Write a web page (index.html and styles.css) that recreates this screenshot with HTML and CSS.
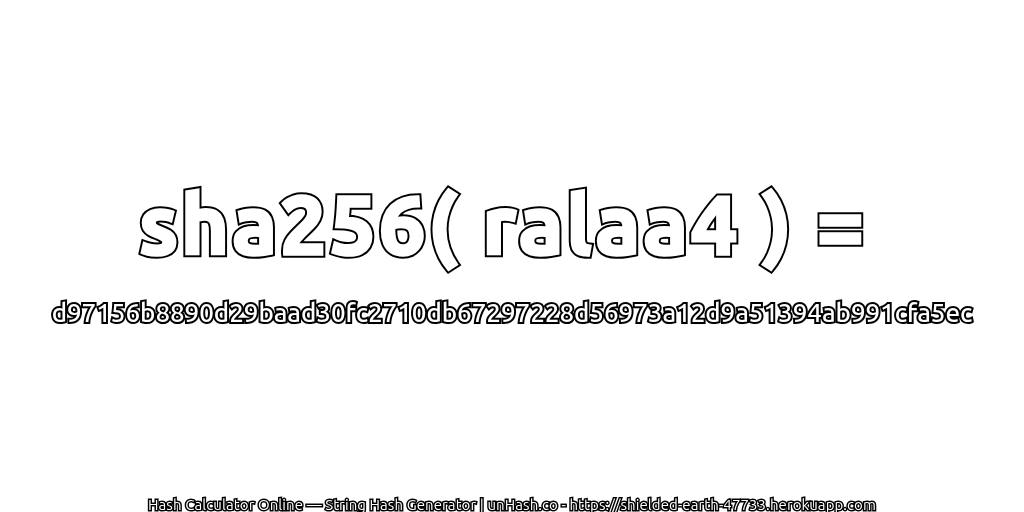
FILE: index.html
```html
<!DOCTYPE html>
<html lang="en">
<head>
    <meta charset="UTF-8">
    <title>Hash Calculator Online</title>
    <link rel="stylesheet" href="styles.css">
</head>
<body>
    <main class="hash-card">
        <h1 class="hash-title" data-text="sha256( ralaa4 ) =">sha256( ralaa4 ) =</h1>
        <p class="hash-value">d97156b8890d29baad30fc2710db67297228d56973a12d9a51394ab991cfa5ec</p>
    </main>
    <footer class="hash-footer">Hash Calculator Online — String Hash Generator | unHash.co - https://shielded-earth-47733.herokuapp.com</footer>
</body>
</html>
```

FILE: styles.css
```css
html, body {
    margin: 0;
    height: 100%;
}
body {
    display: flex;
    flex-direction: column;
    width: 1024px;
    height: 512px;
    overflow: hidden;
    background-color: white;
    font-family: "Ubuntu", "Open Sans", "DejaVu Sans", sans-serif;
    color: white;
    text-align: center;
    -webkit-text-stroke-color: black;
    paint-order: stroke fill;
}
.hash-card {
    flex: 1;
    display: flex;
    flex-direction: column;
    align-items: center;
    padding-top: 174px;
}
.hash-title {
    position: relative;
    margin: 0 18px 0 0;
    font-size: 82px;
    line-height: 100px;
    font-weight: 700;
    letter-spacing: 3.2px;
    white-space: nowrap;
    -webkit-text-stroke-width: 7.5px;
}
/* white layer on top so the outline stays thin on fat letters */
.hash-title::after {
    content: attr(data-text);
    position: absolute;
    top: 0;
    left: 0;
    -webkit-text-stroke-color: white;
    -webkit-text-stroke-width: 3.5px;
}
.hash-value {
    margin: 24px 0 0;
    font-size: 26px;
    line-height: 30px;
    font-weight: 500;
    letter-spacing: -0.05px;
    white-space: nowrap;
    will-change: opacity;
    -webkit-text-stroke-width: 4px;
    text-shadow: 0 1px 2px rgba(0, 0, 0, 0.5);
}
.hash-footer {
    font-size: 15px;
    line-height: 17px;
    margin-bottom: -1px;
    letter-spacing: 0.09px;
    white-space: nowrap;
    will-change: opacity;
    -webkit-text-stroke-width: 3px;
}
```
